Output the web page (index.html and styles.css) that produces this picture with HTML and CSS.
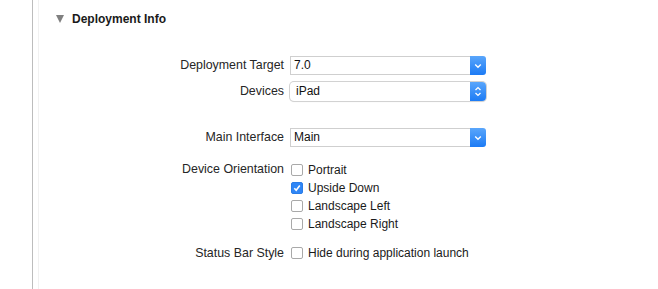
FILE: index.html
```html
<!DOCTYPE html>
<html lang="en">
<head>
  <meta charset="UTF-8">
  <title>Deployment Info</title>
  <link rel="stylesheet" href="styles.css">
</head>
<body>
  <div class="page">
    <div class="side"></div>
    <div class="content">

      <!-- Section header -->
      <div class="section-head">
        <span class="disclosure"></span>
        <span class="section-title">Deployment Info</span>
      </div>

      <div class="row row-first">
        <label class="label">Deployment Target</label>
        <div class="combo">
          <span class="combo-text">7.0</span>
          <span class="combo-btn">
            <svg width="8" height="6" viewBox="0 0 8 6"><path d="M1.2 1.6 L4 4.3 L6.8 1.6" fill="none" stroke="#fff" stroke-width="1.4"/></svg>
          </span>
        </div>
      </div>

      <div class="row">
        <label class="label">Devices</label>
        <div class="popup">
          <span class="popup-text">iPad</span>
          <span class="popup-btn">
            <svg width="8" height="11" viewBox="0 0 8 11"><path d="M1.5 4 L4 1.6 L6.5 4 M1.5 7 L4 9.4 L6.5 7" fill="none" stroke="#fff" stroke-width="1.3"/></svg>
          </span>
        </div>
      </div>

      <div class="row row-gap">
        <label class="label">Main Interface</label>
        <div class="combo">
          <span class="combo-text">Main</span>
          <span class="combo-btn">
            <svg width="8" height="6" viewBox="0 0 8 6"><path d="M1.2 1.6 L4 4.3 L6.8 1.6" fill="none" stroke="#fff" stroke-width="1.4"/></svg>
          </span>
        </div>
      </div>

      <div class="row row-top row-orient">
        <label class="label">Device Orientation</label>
        <div class="checks">
          <div class="check"><span class="box"></span>Portrait</div>
          <div class="check"><span class="box box-on">
            <svg width="10" height="10" viewBox="0 0 10 10"><path d="M2.3 5.2 L4.2 7.2 L7.8 2.6" fill="none" stroke="#fff" stroke-width="1.6"/></svg>
          </span>Upside Down</div>
          <div class="check"><span class="box"></span>Landscape Left</div>
          <div class="check"><span class="box"></span>Landscape Right</div>
        </div>
      </div>

      <div class="row row-status">
        <label class="label">Status Bar Style</label>
        <div class="check"><span class="box"></span>Hide during application launch</div>
      </div>

    </div>
  </div>
</body>
</html>
```

FILE: styles.css
```css
body {
  margin: 0;
  background: #fff;
  font-family: "Liberation Sans", Arial, sans-serif;
  font-size: 12px;
  color: #262626;
}
.page {
  display: flex;
  min-height: 289px;
}
.side {
  width: 32px;
  border-right: 1px solid #bdbdbd;
}
.content {
  flex: 1;
  border-left: 1px solid #f1f1f1;
  margin-left: 5px;
}
.section-head {
  display: flex;
  align-items: center;
  height: 14px;
  margin-top: 12px;
  padding-left: 17px;
}
.disclosure {
  width: 0;
  height: 0;
  border-left: 4.5px solid transparent;
  border-right: 4.5px solid transparent;
  border-top: 8px solid #808080;
  margin-right: 8px;
}
.section-title {
  font-weight: bold;
  font-size: 12px;
  color: #1a1a1a;
}
.row {
  display: flex;
  align-items: center;
  margin-top: 7px;
}
.row-first {
  margin-top: 30px;
}
.row-gap {
  margin-top: 27px;
}
.row-top {
  align-items: flex-start;
}
.row-orient {
  margin-top: 14px;
}
.row-status {
  margin-top: 11px;
}
.label {
  width: 245px;
  text-align: right;
  margin-right: 6px;
  line-height: 17px;
  font-size: 12.4px;
}
.combo {
  display: flex;
  width: 196px;
  height: 19px;
}
.combo-text {
  flex: 1;
  border: 1px solid #cfcfcf;
  border-right: none;
  padding-left: 3px;
  line-height: 17px;
  color: #111;
}
.combo-btn {
  width: 16px;
  background: linear-gradient(#5aa6fb, #1c7bf5);
  border-radius: 0 3px 3px 0;
  display: flex;
  align-items: center;
  justify-content: center;
}
.popup {
  display: flex;
  width: 196px;
  height: 19px;
  border-radius: 4px;
  box-shadow: 0 0 0 1px #d2d2d2, 0 1px 1px rgba(0, 0, 0, 0.12);
  overflow: hidden;
}
.popup-text {
  flex: 1;
  padding-left: 6px;
  line-height: 19px;
  color: #111;
}
.popup-btn {
  width: 16px;
  background: linear-gradient(#5aa6fb, #1c7bf5);
  display: flex;
  align-items: center;
  justify-content: center;
}
.checks {
  display: flex;
  flex-direction: column;
}
.check {
  display: flex;
  align-items: center;
  height: 17px;
  margin-bottom: 1px;
  color: #1a1a1a;
}
.box {
  width: 10px;
  height: 10px;
  border: 1px solid #a9a9a9;
  border-radius: 2px;
  margin-right: 5px;
  margin-left: 1px;
  background: #fff;
  display: flex;
  align-items: center;
  justify-content: center;
}
.box-on {
  background: #2f86f6;
  border-color: #2a7de8;
}
```
